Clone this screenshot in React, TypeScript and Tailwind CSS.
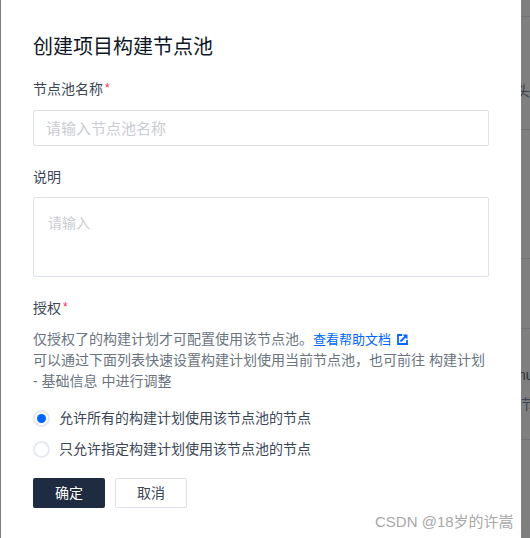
const FONT = "font-['Liberation_Sans','Noto_Sans_CJK_SC',sans-serif]";

function Label({ text, required }: { text: string; required?: boolean }) {
  return (
    <div className="flex h-5 items-center text-[14px] leading-5 text-[#3c4656]">
      {text}
      {required && <span className="ml-[2px] -mt-[3px] text-[12px] text-[#f0304f]">*</span>}
    </div>
  );
}

function Radio({ label, checked }: { label: string; checked?: boolean }) {
  return (
    <label className="flex h-5 items-center gap-[9px] text-[14px] leading-5 text-[#3c4656]">
      <span className="flex h-[17px] w-[17px] items-center justify-center rounded-full border-2 border-[#e6e9f0] bg-white">
        {checked && <span className="h-[9px] w-[9px] rounded-full bg-[#0066ff]" />}
      </span>
      {label}
    </label>
  );
}

function LinkIcon() {
  return (
    <svg viewBox="0 0 11 11" className="ml-[6px] h-[11px] w-[11px] text-[#0066ff]" fill="none" stroke="currentColor">
      <path d="M5 1H1v9h9V6" strokeWidth="1.8" />
      <path d="M3.5 7.5L8.5 2.5" strokeWidth="1.8" />
      <path d="M5.5 0.5h5v5z" fill="currentColor" stroke="none" />
    </svg>
  );
}

// dimmed page that shows past the right edge of the dialog
function Backdrop() {
  return (
    <div className="relative flex-1 overflow-hidden bg-[#7f7f7f]">
      <div className="h-[17px] border-b border-[#6f7277]" />
      <div className="h-[113px] border-b border-[#6f7277]" />
      <div className="h-[129px] border-b border-[#6f7277]" />
      <div className="h-[70px] border-b border-[#6f7277]" />
      <div className="h-[111px] border-b border-[#6f7277]" />
      <span className="absolute -left-[5px] top-[83px] text-[14px] leading-4 text-[#3a3f47]">头</span>
      <span className="absolute -left-[3px] top-[367px] text-[14px] leading-4 text-[#2c3038]">nu</span>
      <span className="absolute left-0 top-[396px] text-[14px] leading-4 text-[#3a4656]">节</span>
    </div>
  );
}

export default function App() {
  return (
    <div className={`relative flex h-[538px] w-[530px] overflow-hidden bg-[#7f7f7f] ${FONT}`}>
      <div className="w-px bg-[#7f7f7f]" />
      <div className="flex w-[520px] flex-col bg-white pl-[32px] pr-[32px] pt-[34px]">
        <h1 className="text-[20px] font-normal leading-[26px] text-[#0e1726]">创建项目构建节点池</h1>

        <div className="mt-[19px]">
          <Label text="节点池名称" required />
        </div>
        <input
          className="mt-[11px] h-[36px] w-[456px] rounded-[2px] border border-[#dde1ea] px-[12px] text-[15px] outline-none placeholder:text-[#c9ccd2]"
          placeholder="请输入节点池名称"
        />

        <div className="mt-[21px]">
          <Label text="说明" />
        </div>
        <textarea
          className="mt-[10px] h-[80px] w-[456px] resize-none rounded-[2px] border border-[#dde1ea] px-[14px] py-[15px] text-[14px] leading-5 outline-none placeholder:text-[#c9ccd2]"
          placeholder="请输入"
        />

        <div className="mt-[21px]">
          <Label text="授权" required />
        </div>
        <div className="mt-[11px] text-[14px] leading-[21px] text-[#6b7480]">
          <p className="flex items-center">
            仅授权了的构建计划才可配置使用该节点池。
            <a className="text-[13px] text-[#0066ff]">查看帮助文档</a>
            <LinkIcon />
          </p>
          <p>可以通过下面列表快速设置构建计划使用当前节点池，也可前往 构建计划</p>
          <p>- 基础信息 中进行调整</p>
        </div>

        <div className="mt-[16px] flex flex-col gap-[11px]">
          <Radio label="允许所有的构建计划使用该节点池的节点" checked />
          <Radio label="只允许指定构建计划使用该节点池的节点" />
        </div>

        <div className="mt-[19px] flex gap-[10px]">
          <button className="h-[30px] w-[72px] rounded-[2px] bg-[#1f2b40] text-[14px] text-white">确定</button>
          <button className="h-[30px] w-[72px] rounded-[2px] border border-[#dde1ea] bg-white text-[14px] text-[#3c4656]">取消</button>
        </div>
      </div>
      <Backdrop />
      <span className="absolute left-[375px] top-[513px] text-[15px] leading-[18px] text-[#a8a8a8]">CSDN @18岁的许嵩</span>
    </div>
  );
}
